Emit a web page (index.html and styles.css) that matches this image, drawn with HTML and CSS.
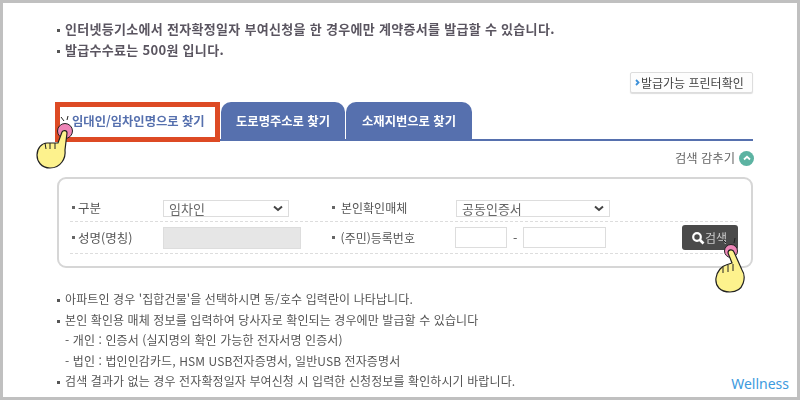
FILE: index.html
```html
<!DOCTYPE html>
<html lang="ko">
<head>
    <meta charset="UTF-8">
    <title>확정일자 부여현황</title>
    <link rel="stylesheet" href="styles.css">
</head>
<body>
    <div class="frame">
        <ul class="notice">
            <li>인터넷등기소에서 전자확정일자 부여신청을 한 경우에만 계약증서를 발급할 수 있습니다.</li>
            <li>발급수수료는 500원 입니다.</li>
        </ul>
        <div class="printer-row">
            <button class="printer-btn">
                <svg width="5" height="7" viewBox="0 0 5 7" fill="none" stroke="#3b8fd8" stroke-width="1.8"><path d="M1 1 3.5 3.5 1 6"></path></svg>
                발급가능 프린터확인
            </button>
        </div>
        <div class="tabs">
            <div class="tab tab-active">임대인/임차인명으로 찾기</div>
            <div class="tab tab-road">도로명주소로 찾기</div>
            <div class="tab tab-lot">소재지번으로 찾기</div>
        </div>
        <div class="toggle">
            검색 감추기
            <span class="toggle-icon">
                <svg width="8" height="6" viewBox="0 0 8 6" fill="none" stroke="#fff" stroke-width="1.8"><path d="M1 4.5 4 1.8 7 4.5"></path></svg>
            </span>
        </div>
        <div class="panel">
            <div class="row row-first">
                <div class="label">구분</div>
                <div class="select select-short">임차인<svg width="10" height="7" viewBox="0 0 10 7" fill="none" stroke="#444" stroke-width="2"><path d="M1 1.5 5 5 9 1.5"></path></svg></div>
                <div class="label label-right">본인확인매체</div>
                <div class="select select-long">공동인증서<svg width="10" height="7" viewBox="0 0 10 7" fill="none" stroke="#444" stroke-width="2"><path d="M1 1.5 5 5 9 1.5"></path></svg></div>
            </div>
            <div class="row row-second">
                <div class="label">성명(명칭)</div>
                <div class="input-disabled"></div>
                <div class="label label-right">(주민)등록번호</div>
                <div class="input input-front"></div>
                <span class="dash">-</span>
                <div class="input input-back"></div>
                <button class="search-btn">
                    <svg width="14" height="14" viewBox="0 0 14 14" fill="none" stroke="#fff"><circle cx="6" cy="6" r="3.8" stroke-width="2.2"></circle><path d="M9 9 12.5 12.5" stroke-width="2.6"></path></svg>
                    검색
                </button>
            </div>
        </div>
        <ul class="guide">
            <li>아파트인 경우 '집합건물'을 선택하시면 동/호수 입력란이 나타납니다.</li>
            <li>본인 확인용 매체 정보를 입력하여 당사자로 확인되는 경우에만 발급할 수 있습니다</li>
            <li class="sub">- 개인 : 인증서 (실지명의 확인 가능한 전자서명 인증서)</li>
            <li class="sub">- 법인 : 법인인감카드, HSM USB전자증명서, 일반USB 전자증명서</li>
            <li>검색 결과가 없는 경우 전자확정일자 부여신청 시 입력한 신청정보를 확인하시기 바랍니다.</li>
        </ul>

        <!-- 강조 표시 -->
        <svg class="hand hand-tab" width="44" height="62" viewBox="0 0 44 62">
            <path d="M27 5 30 9M34 4 33 8" stroke="#222" stroke-width="1" fill="none"></path>
            <circle cx="31" cy="19" r="7.5" fill="#ee86b8" stroke="#222" stroke-width="1"></circle>
            <path d="M28 20C29 18 33 18 33 21L31 38C32 46 27 56 16 56 7 56 3 49 3 43 3 36 8 31 13 31L24 31Z" fill="#fdf28d" stroke="#222" stroke-width="1.2"></path>
            <path d="M11 31 12 37M16 31 16 37M21 31 21 37" stroke="#222" stroke-width="1" fill="none"></path>
        </svg>
        <svg class="hand hand-search" width="44" height="62" viewBox="0 0 44 62">
            <path d="M11 6 14 9M23 4 22 9" stroke="#222" stroke-width="1" fill="none"></path>
            <circle cx="19" cy="17" r="6.5" fill="#ee86b8" stroke="#222" stroke-width="1"></circle>
            <path d="M16 19C16 15 21 15 22 18L30 36C34 42 33 58 18 58 8 58 3 52 4 44 5 37 10 32 14 31L20 29Z" fill="#fdf28d" stroke="#222" stroke-width="1.2"></path>
            <path d="M11 33 11 39M16 31 16 38M21 30 21 37" stroke="#222" stroke-width="1" fill="none"></path>
        </svg>
        <div class="watermark">Wellness</div>
    </div>
</body>
</html>
```

FILE: styles.css
```css
* {
    box-sizing: border-box;
}
html, body {
    margin: 0;
    padding: 0;
}
body {
    width: 800px;
    height: 400px;
    overflow: hidden;
    background: #fff;
    font-family: "Noto Sans CJK KR", "Noto Sans", sans-serif;
    color: #555;
}
.frame {
    position: relative;
    width: 800px;
    height: 400px;
    border: 3px solid #c0c0c0;
    padding: 0 44px 0 54px;
}
/* the source capture is a little soft */
.notice, .printer-row, .tabs, .toggle, .panel, .guide, .hand {
    filter: blur(0.35px);
}
ul {
    list-style: none;
    margin: 0;
    padding: 0;
}
.notice {
    padding-top: 16px;
    font-size: 13px;
    font-weight: 700;
    letter-spacing: 0.3px;
    color: #5a5560;
}
.notice li {
    height: 21px;
    line-height: 20px;
    white-space: nowrap;
}
.notice li::before {
    content: "";
    display: inline-block;
    width: 3px;
    height: 3px;
    margin-right: 5px;
    vertical-align: middle;
    background: #555;
}
.printer-row {
    display: flex;
    justify-content: flex-end;
    margin-top: 11px;
}
.printer-btn {
    height: 21px;
    width: 123px;
    padding: 0 0 0 4px;
    display: flex;
    align-items: center;
    gap: 1px;
    font-family: inherit;
    font-size: 12px;
    color: #444;
    white-space: nowrap;
    background: #fdfdfd;
    border: 1px solid #ddd;
    border-radius: 2px;
    box-shadow: 0 1px 1px #ddd;
}
.tabs {
    display: flex;
    margin-top: 9px;
    height: 39px;
    border-bottom: 2px solid #5670ae;
}
.tab {
    height: 37px;
    display: flex;
    align-items: center;
    justify-content: center;
    font-size: 12.3px;
    font-weight: 700;
    color: #fff;
    white-space: nowrap;
    background: #5670ae;
    border-radius: 10px 10px 0 0;
}
.tab-active {
    position: relative;
    width: 165px;
    height: 40px;
    margin-left: -2px;
    padding: 0 0 3px 12px;
    justify-content: flex-start;
    color: #5670ae;
    background: #fff;
    border: 5px solid #dd4a24;
    border-radius: 0;
}
.tab-road {
    width: 124px;
    margin-left: 1px;
}
.tab-lot {
    width: 126px;
    margin-left: 1px;
}
.toggle {
    display: flex;
    justify-content: flex-end;
    align-items: center;
    gap: 4px;
    height: 18px;
    margin: 8px -1px 0 0;
    font-size: 12.3px;
    color: #666;
}
.toggle-icon {
    width: 15px;
    height: 15px;
    display: flex;
    align-items: center;
    justify-content: center;
    border-radius: 50%;
    background: #5cb3a2;
}
.panel {
    height: 91px;
    margin-top: 10px;
    padding: 19px 13px 0 11px;
    border: 2px solid #d6d6d6;
    border-radius: 9px;
}
.row {
    display: flex;
    align-items: center;
    padding-left: 2px;
    border-bottom: 1px dashed #ddd;
    font-size: 12.5px;
    color: #555;
}
.row-first {
    height: 24px;
    padding-bottom: 3px;
}
.row-first .label {
    padding-bottom: 2px;
}
.row-second {
    height: 32px;
}
.label {
    width: 91px;
    white-space: nowrap;
    display: flex;
    align-items: center;
}
.label::before {
    content: "";
    width: 3px;
    height: 3px;
    margin-right: 3px;
    background: #666;
}
.label-right {
    width: 124px;
    font-size: 12px;
}
.label-right::before {
    margin-right: 6px;
}
.row-first .label-right {
    margin-left: 43px;
}
.row-second .label-right {
    margin-left: 31px;
}
.select {
    height: 17px;
    display: flex;
    align-items: center;
    justify-content: space-between;
    padding: 0 5px;
    font-size: 13px;
    color: #666;
    border: 1px solid #ddd;
}
.select-short {
    width: 126px;
}
.select-long {
    width: 154px;
}
.input-disabled {
    width: 138px;
    height: 22px;
    background: #e6e6e6;
    border: 1px solid #ddd;
}
.input {
    height: 21px;
    border: 1px solid #ddd;
    background: #fff;
}
.input-front {
    width: 52px;
}
.input-back {
    width: 83px;
}
.dash {
    width: 16px;
    text-align: center;
}
.search-btn {
    display: flex;
    align-items: center;
    gap: 0;
    width: 56px;
    height: 25px;
    margin-left: 76px;
    padding: 0 0 0 9px;
    font-family: inherit;
    font-size: 12px;
    color: #ccc;
    white-space: nowrap;
    background: #4a4a4a;
    border: none;
    border-radius: 3px;
}
.guide {
    margin-top: 21px;
    font-size: 12px;
    letter-spacing: 0.1px;
    color: #555;
}
.guide li {
    height: 20.5px;
    line-height: 20px;
    white-space: nowrap;
}
.guide li::before {
    content: "";
    display: inline-block;
    width: 3px;
    height: 3px;
    margin-right: 5px;
    vertical-align: middle;
    background: #555;
}
.guide li.sub {
    padding-left: 8px;
}
.guide li.sub::before {
    display: none;
}
.hand {
    position: absolute;
}
.hand-tab {
    left: 31px;
    top: 109px;
}
.hand-search {
    left: 709px;
    top: 231px;
}
.watermark {
    position: absolute;
    right: 8px;
    bottom: 4px;
    font-family: "Noto Sans", sans-serif;
    font-size: 14px;
    color: #3d9ade;
}
```
